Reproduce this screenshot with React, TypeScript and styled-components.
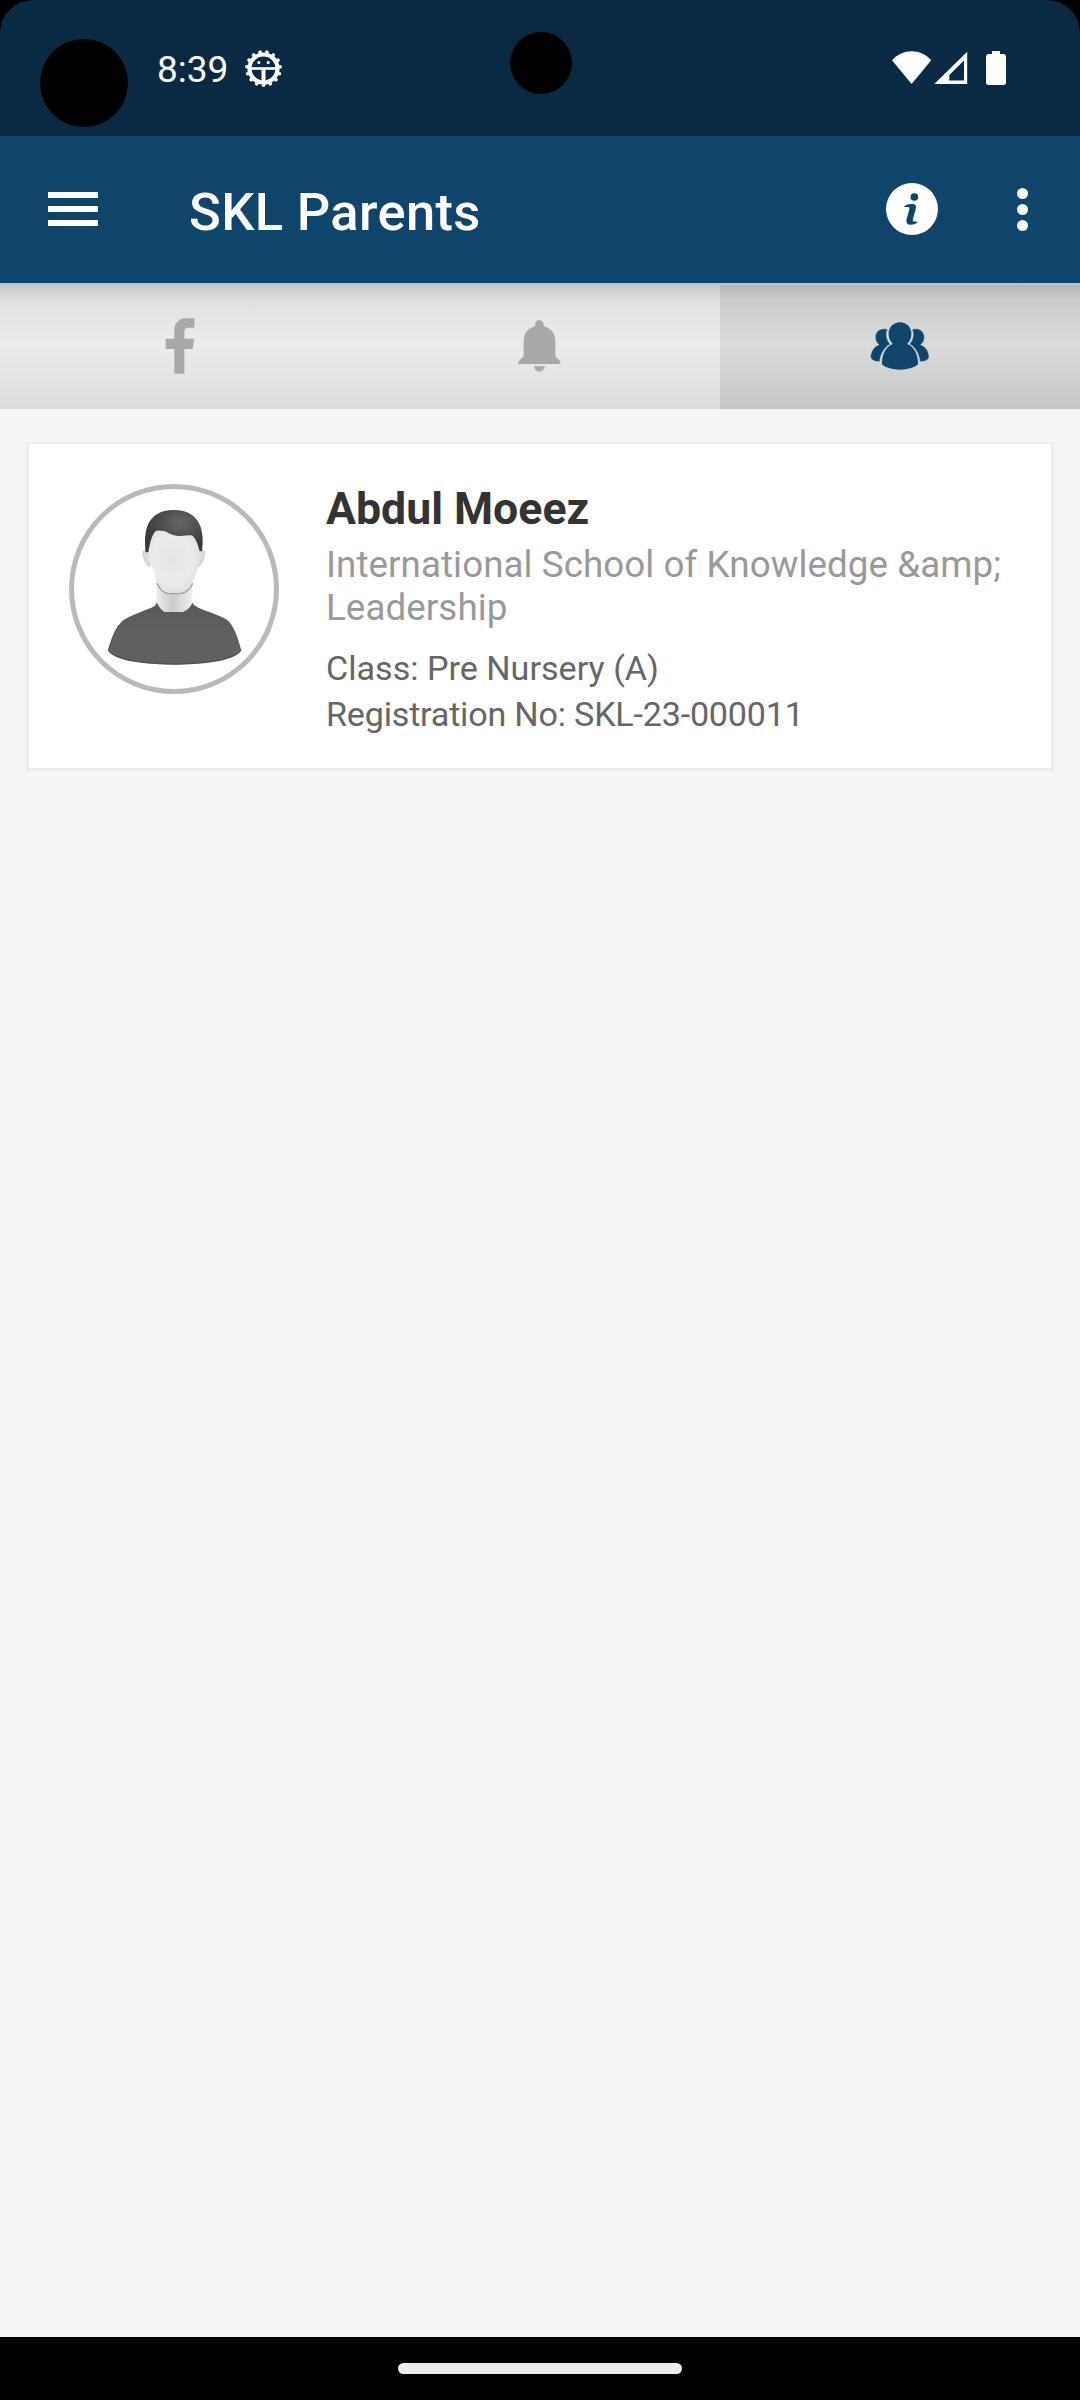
import React from "react";
import styled, { createGlobalStyle } from "styled-components";

const GlobalStyle = createGlobalStyle`
  *, *::before, *::after { box-sizing: border-box; }
  html, body { margin: 0; padding: 0; background: #000; }
  body { font-family: Roboto, "Noto Sans", sans-serif; }
  svg { display: block; flex: none; }
`;

const Screen = styled.div`
  position: relative;
  display: flex;
  flex-direction: column;
  width: 1080px;
  height: 2400px;
  overflow: hidden;
  background: #000;
`;

const StatusBar = styled.header`
  display: flex;
  align-items: center;
  height: 136px;
  padding: 0 74px 0 157px;
  border-radius: 33px 33px 0 0;
  background: #0a2a43;
`;

const Clock = styled.span`
  width: 87.5px;
  font-size: 37px;
  line-height: 44px;
  color: #fff;
  padding-top: 4px;
`;

const StatusIcons = styled.div`
  display: flex;
  align-items: center;
  margin-left: auto;
`;

const Cutout = styled.div<{ $x: number; $y: number; $size: number }>`
  position: absolute;
  left: ${(p) => p.$x}px;
  top: ${(p) => p.$y}px;
  width: ${(p) => p.$size}px;
  height: ${(p) => p.$size}px;
  border-radius: 50%;
  background: #000;
`;

const AppBar = styled.div`
  display: flex;
  align-items: center;
  height: 147px;
  padding: 0 52px 1px 48px;
  background: #0f446b;
`;

const MenuButton = styled.button`
  display: flex;
  flex-direction: column;
  gap: 8.5px;
  width: 50px;
  padding: 0;
  border: 0;
  background: none;
`;

const MenuLine = styled.span`
  height: 5.6px;
  background: #fff;
`;

const Title = styled.h1`
  margin: 0 auto 0 91px;
  padding-top: 6px;
  font-size: 52.5px;
  line-height: 62px;
  font-weight: 500;
  letter-spacing: 0.35px;
  color: #fff;
`;

const Actions = styled.div`
  display: flex;
  align-items: center;
  gap: 79px;
`;

const Dots = styled.div`
  display: flex;
  flex-direction: column;
  gap: 5px;
`;

const Dot = styled.span`
  width: 11px;
  height: 11px;
  border-radius: 50%;
  background: #fff;
`;

const Tabs = styled.nav`
  position: relative;
  display: grid;
  grid-template-columns: repeat(3, 1fr);
  height: 126px;

  &::before {
    content: "";
    position: absolute;
    inset: 0 0 auto 0;
    height: 18px;
    background: linear-gradient(rgba(70, 62, 50, 0.13), rgba(70, 70, 70, 0));
    border-top: 2px solid #b2c3d3;
  }
`;

const Tab = styled.div<{ $active?: boolean }>`
  display: flex;
  align-items: center;
  justify-content: center;
  padding-right: ${(p) => (p.$active ? 0 : 1)}px;
  background: ${(p) =>
    p.$active
      ? "linear-gradient(#c6c6c6, #dbdbdb 49%, #dadada 51%, #c7c7c7)"
      : "linear-gradient(#dcdcdc, #ececec 49%, #ebebeb 51%, #dcdcdc)"};
`;

const Content = styled.main`
  flex: 1;
  padding: 33px 26px 0;
  background: #f5f5f5;
`;

const Card = styled.article`
  display: flex;
  height: 329px;
  padding: 39px 24px 0 40px;
  border: 3px solid #ececec;
  border-top-width: 2px;
  background: #fff;
`;

const Avatar = styled.div`
  flex: none;
  width: 210px;
  height: 210px;
  margin-top: 1px;
  border: 5px solid #b9b9b9;
  border-radius: 50%;
`;

const Details = styled.div`
  flex: 1;
  margin-left: 47px;
`;

const Name = styled.h2`
  margin: 0;
  font-size: 44.625px;
  line-height: 52px;
  font-weight: 700;
  color: #333;
`;

const School = styled.p`
  margin: 8px 0 0;
  width: 690px;
  font-size: 36.75px;
  line-height: 43px;
  letter-spacing: 0.07px;
  color: #999;
`;

const Info = styled.p<{ $gap: number; $tracking?: number }>`
  margin: ${(p) => p.$gap}px 0 0;
  font-size: 34.125px;
  line-height: 40px;
  letter-spacing: ${(p) => p.$tracking ?? 0}px;
  color: #666;
`;

const NavBar = styled.footer`
  display: flex;
  align-items: center;
  justify-content: center;
  height: 63px;
  background: #000;
`;

const Handle = styled.div`
  width: 284px;
  height: 11px;
  border-radius: 6px;
  background: #ececec;
`;

const TEETH = Array.from({ length: 15 }, (_, i) => (i * 360) / 15);

const DebugIcon = () => (
  <svg width="37" height="37" viewBox="-18.5 -18.5 37 37">
    <g fill="none" stroke="#fff">
      <circle r="14" strokeWidth="4.2" />
      {TEETH.map((a) => (
        <path key={a} d="M0 14.5V16.7" strokeWidth="3.6" strokeLinecap="round" transform={`rotate(${a})`} />
      ))}
      <path d="M-13 0H13" strokeWidth="2.6" />
      <path d="M0 0V14" strokeWidth="4" />
    </g>
    <circle cx="-4.7" cy="-6" r="1.5" fill="#fff" />
    <circle cx="4.7" cy="-6" r="1.5" fill="#fff" />
  </svg>
);

const SignalIcons = () => (
  <svg width="114" height="34" viewBox="892 51 114 34" fill="#fff">
    <path d="M892 60.2C903 48.2 920.5 48.2 931.2 60.2L911.6 84Z" />
    <path fillRule="evenodd" d="M934.3 84L967.2 51.8V84ZM949.3 80.4H964V60.5L949.3 75Z" />
    <path d="M992 51H1000V54H1003.5Q1006 54 1006 56.5V82.5Q1006 85 1003.5 85H988.5Q986 85 986 82.5V56.5Q986 54 988.5 54H992Z" />
  </svg>
);

const InfoIcon = () => (
  <svg width="52" height="52" viewBox="138 159 156 156">
    <circle cx="216" cy="237" r="78" fill="#fff" />
    <g fill="#0f446b">
      <circle cx="223" cy="201" r="11.5" />
      <path d="M193 229C200 223 209 221 219 222C228 223 229 229 227 238L219 266C217 273 219 275 233 275C229 282 219 285 209 284C200 283 198 276 200 267L208 238C210 231 207 230 193 231Z" />
    </g>
  </svg>
);

const FacebookIcon = () => (
  <svg width="30" height="56" viewBox="495 142 88 168" fill="#a9a9a9">
    <path d="M522 309V235H496V204H522V182C522 156 536 143 558 143H582V171H566C555 171 552 175 552 184V204H581L577 235H552V309Z" />
  </svg>
);

const BellIcon = () => (
  <svg width="43" height="52" viewBox="204 150 129 156" fill="#a9a9a9">
    <path d="M256 169C254 159 258 151 268 151S283 159 281 169C303 174 316 190 316 213V259C319 264 332 271 332 282H205C205 271 218 264 221 259V213C221 190 234 174 256 169Z" />
    <path d="M252 289H285C282 300 277 305 268 305S255 300 252 289Z" />
  </svg>
);

const sidePerson =
  "M527 176C508 173 496 186 496 201C496 211 501 219 507 223C491 229 482 244 482 261C485 270 495 274 509 274C511 251 523 231 541 222C528 209 526 188 533 177Z";

const PeopleIcon = () => (
  <svg width="60" height="48" viewBox="480 155 180 144" fill="#0f446b">
    <path d={sidePerson} stroke="#b4cbdc" strokeWidth="1.5" />
    <path d={sidePerson} stroke="#b4cbdc" strokeWidth="1.5" transform="translate(1139 0) scale(-1 1)" />
    <path
      d="M570 156C590 156 604 171 604 191C604 204 599 214 591 221C612 228 624 251 624 282C612 293 591 298 570 298S527 293 516 282C516 251 528 228 549 221C541 214 536 204 536 191C536 171 550 156 570 156Z"
      stroke="#c3d5e2"
      strokeWidth="6"
      paintOrder="stroke"
    />
  </svg>
);

const Portrait = () => (
  <svg width="200" height="200" viewBox="162 177 600 600">
    <defs>
      <radialGradient id="hair" cx="0.6" cy="0.3" r="0.6">
        <stop offset="0" stopColor="#666" />
        <stop offset="1" stopColor="#3b3b3b" />
      </radialGradient>
      <radialGradient id="face" cx="0.45" cy="0.45" r="0.6">
        <stop offset="0" stopColor="#e5e5e5" />
        <stop offset="0.6" stopColor="#ececec" />
        <stop offset="1" stopColor="#dedede" />
      </radialGradient>
      <linearGradient id="neck">
        <stop offset="0" stopColor="#ececec" />
        <stop offset="0.45" stopColor="#cbcbcb" />
        <stop offset="1" stopColor="#f0f0f0" />
      </linearGradient>
      <linearGradient id="shirt" x1="0" y1="0" x2="0" y2="1">
        <stop offset="0" stopColor="#585858" />
        <stop offset="0.5" stopColor="#606060" />
        <stop offset="1" stopColor="#606060" />
      </linearGradient>
    </defs>
    <path
      d="M410 517C408 527 403 530 394 533C362 545 334 556 312 569C289 583 274 632 264 661C273 681 326 704 464 704S653 681 664 661C655 628 642 585 621 569C598 555 562 545 535 533C526 529 520 526 517 517L490 545H432Z"
      fill="url(#shirt)"
    />
    <path d="M297 585C281 607 272 638 265 661C276 679 326 700 464 702C594 700 651 679 663 661" fill="none" stroke="#505050" strokeWidth="3" />
    <path d="M410 450H517V519C510 532 504 540 492 544Q462 547 431 544C420 537 416 528 410 517Z" fill="url(#neck)" />
    <path d="M378 361C368 360 367 367 371 381C375 397 380 406 389 409L394 360ZM546 361C555 360 556 367 552 381C548 397 542 406 535 409L530 360Z" fill="#dadada" stroke="#b8b8b8" strokeWidth="2" />
    <path
      d="M389 300H537L546 361C542 395 532 420 518 457C512 471 501 485 484 490Q465 492 443 490C427 485 416 471 411 457C403 420 386 397 382 365Z"
      fill="url(#face)"
    />
    <path
      d="M411 460C417 474 428 488 443 490Q465 492 484 490C500 487 513 475 518 460"
      fill="none"
      stroke="#a2a2a2"
      strokeWidth="4"
    />
    <path
      d="M377 367C370 309 377 241 462 240C545 241 554 309 546 364H539C534 345 529 328 518 317C510 314 500 316 489 317C458 321 447 309 434 304C422 300 413 301 407 303C393 317 390 343 385 367Z"
      fill="url(#hair)"
    />
  </svg>
);

export default function App() {
  return (
    <>
      <GlobalStyle />
      <Screen>
        <StatusBar>
          <Clock>8:39</Clock>
          <DebugIcon />
          <StatusIcons>
            <SignalIcons />
          </StatusIcons>
        </StatusBar>
        <Cutout $x={40} $y={39} $size={88} />
        <Cutout $x={509.5} $y={31.5} $size={62} />

        <AppBar>
          <MenuButton aria-label="Menu">
            <MenuLine />
            <MenuLine />
            <MenuLine />
          </MenuButton>
          <Title>SKL Parents</Title>
          <Actions>
            <InfoIcon />
            <Dots>
              <Dot />
              <Dot />
              <Dot />
            </Dots>
          </Actions>
        </AppBar>

        <Tabs>
          <Tab>
            <FacebookIcon />
          </Tab>
          <Tab>
            <BellIcon />
          </Tab>
          <Tab $active>
            <PeopleIcon />
          </Tab>
        </Tabs>

        <Content>
          <Card>
            <Avatar>
              <Portrait />
            </Avatar>
            <Details>
              <Name>Abdul Moeez</Name>
              <School>International School of Knowledge &amp;amp; Leadership</School>
              <Info $gap={19}>Class: Pre Nursery (A)</Info>
              <Info $gap={6} $tracking={-0.2}>
                Registration No: SKL-23-000011
              </Info>
            </Details>
          </Card>
        </Content>

        <NavBar>
          <Handle />
        </NavBar>
      </Screen>
    </>
  );
}
